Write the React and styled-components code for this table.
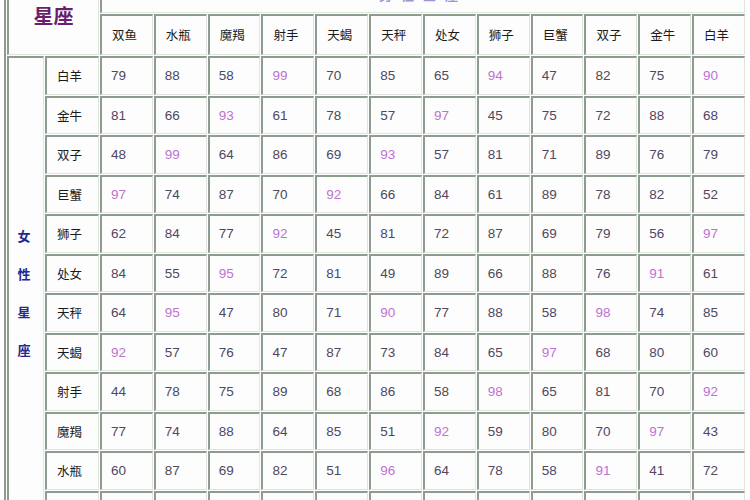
import React from "react";
import styled, { createGlobalStyle } from "styled-components";

const GlobalStyle = createGlobalStyle`
  html, body {
    margin: 0;
    padding: 0;
    background: #ffffff;
  }
  body {
    width: 750px;
    height: 500px;
    overflow: hidden;
    font-family: "Liberation Sans", "Noto Sans CJK SC", sans-serif;
  }
`;

const Page = styled.div`
  padding-left: 4px;
  margin-top: -27px;
`;

const Grid = styled.table`
  table-layout: fixed;
  width: 742px;
  border-collapse: separate;
  border-spacing: 1px;
  border-left: 2px solid #8d9a8d;
`;

const Row = styled.tr`
  height: ${(p) => p.$h || 38.5}px;
`;

const Cell = styled.td`
  border-top: 2px solid #8e9b8f;
  border-left: 2px solid #8e9b8f;
  border-right: 1px solid #dfe4df;
  border-bottom: 1px solid #dfe4df;
  background: #fdfdfd;
  padding: 0 0 0 9px;
  vertical-align: middle;
  white-space: nowrap;
  overflow: hidden;
`;

const NumCell = styled(Cell)`
  font-family: "Liberation Sans", Arial, sans-serif;
  font-size: 13.5px;
  color: ${(p) => (p.$hi ? "#bd72d2" : "#4f4860")};
`;

const LabelCell = styled(Cell)`
  font-family: "Noto Sans CJK SC", sans-serif;
  font-size: 12.5px;
  color: #1b1b1b;
  padding-left: 10px;
`;

const CornerCell = styled(Cell)`
  padding: 0;
  text-align: center;
  font-family: "Noto Sans CJK SC", sans-serif;
  font-size: 20px;
  font-weight: 700;
  color: #6b1f6b;
`;

const TitleCell = styled(Cell)`
  padding: 0;
  text-align: center;
  vertical-align: top;
  font-family: "Noto Sans CJK SC", sans-serif;
  font-size: 13px;
  font-weight: 700;
  letter-spacing: 9px;
  color: #a392d6;
`;

const TitleText = styled.div`
  padding-top: 9px;
`;

const SideCell = styled(Cell)`
  padding: 0 4px 0 0;
  vertical-align: middle;
`;

const SideText = styled.div`
  display: flex;
  flex-direction: column;
  align-items: center;
  gap: 20px;
  font-family: "Noto Sans CJK SC", sans-serif;
  font-size: 13px;
  font-weight: 700;
  color: #23288c;
  line-height: 18px;
`;

const signs = ["双鱼", "水瓶", "魔羯", "射手", "天蝎", "天秤", "处女", "狮子", "巨蟹", "双子", "金牛", "白羊"];

const rows = [
  ["白羊", [79, 88, 58, 99, 70, 85, 65, 94, 47, 82, 75, 90]],
  ["金牛", [81, 66, 93, 61, 78, 57, 97, 45, 75, 72, 88, 68]],
  ["双子", [48, 99, 64, 86, 69, 93, 57, 81, 71, 89, 76, 79]],
  ["巨蟹", [97, 74, 87, 70, 92, 66, 84, 61, 89, 78, 82, 52]],
  ["狮子", [62, 84, 77, 92, 45, 81, 72, 87, 69, 79, 56, 97]],
  ["处女", [84, 55, 95, 72, 81, 49, 89, 66, 88, 76, 91, 61]],
  ["天秤", [64, 95, 47, 80, 71, 90, 77, 88, 58, 98, 74, 85]],
  ["天蝎", [92, 57, 76, 47, 87, 73, 84, 65, 97, 68, 80, 60]],
  ["射手", [44, 78, 75, 89, 68, 86, 58, 98, 65, 81, 70, 92]],
  ["魔羯", [77, 74, 88, 64, 85, 51, 92, 59, 80, 70, 97, 43]],
  ["水瓶", [60, 87, 69, 82, 51, 96, 64, 78, 58, 91, 41, 72]],
  ["双鱼", [74, 79, 71, 77, 96, 59, 57, 76, 93, 58, 63, 81]],
];

const App = () => {
  return (
    <>
      <GlobalStyle />
      <Page>
        <Grid>
          <colgroup>
            <col style={{ width: 37 }} />
            <col style={{ width: 54 }} />
            {signs.map((s) => (
              <col key={s} />
            ))}
          </colgroup>
          <tbody>
            <Row>
              <CornerCell colSpan={2} rowSpan={2}>
                星座
              </CornerCell>
              <TitleCell colSpan={12}>
                <TitleText>男性星座</TitleText>
              </TitleCell>
            </Row>
            <Row $h={41.5}>
              {signs.map((s) => (
                <LabelCell key={s}>{s}</LabelCell>
              ))}
            </Row>
            {rows.map(([name, vals], i) => (
              <Row key={name}>
                {i === 0 && (
                  <SideCell rowSpan={rows.length}>
                    <SideText>
                      <span>女</span>
                      <span>性</span>
                      <span>星</span>
                      <span>座</span>
                    </SideText>
                  </SideCell>
                )}
                <LabelCell>{name}</LabelCell>
                {vals.map((v, j) => (
                  <NumCell key={j} $hi={v >= 90}>
                    {v}
                  </NumCell>
                ))}
              </Row>
            ))}
          </tbody>
        </Grid>
      </Page>
    </>
  );
};

export default App;
